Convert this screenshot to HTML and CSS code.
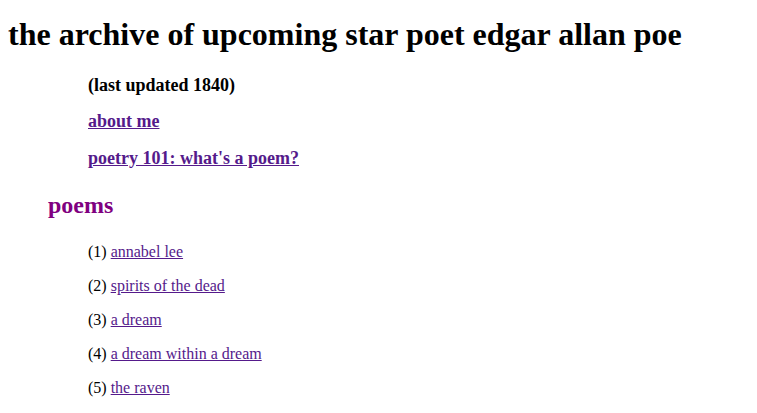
FILE: index.html
```html
<!DOCTYPE html>
<html>
<head>
<meta charset="utf-8">
<title>edgar allan poe</title>
<link rel="stylesheet" href="styles.css">
</head>
<body>
<h1 class="title">the archive of upcoming star poet edgar allan poe</h1>
<div class="intro">
  <h3 class="meta">(last updated 1840)</h3>
  <h3 class="meta"><a href="#about">about me</a></h3>
  <h3 class="meta"><a href="#poetry">poetry 101: what's a poem?</a></h3>
</div>
<h2 class="section">poems</h2>
<div class="list">
  <p class="item">(1) <a href="#annabel">annabel lee</a></p>
  <p class="item">(2) <a href="#spirits">spirits of the dead</a></p>
  <p class="item">(3) <a href="#dream">a dream</a></p>
  <p class="item">(4) <a href="#within">a dream within a dream</a></p>
  <p class="item">(5) <a href="#raven">the raven</a></p>
</div>
</body>
</html>
```
FILE: styles.css
```css
body {
  margin: 8px;
  font-family: "Liberation Serif", "Times New Roman", serif;
  color: #000;
  background: #fff;
}
a {
  color: #551a8b;
}
.title {
  font-size: 32px;
  margin: 8px 0 22px;
}
.intro {
  margin-left: 80px;
}
.meta {
  font-size: 18px;
  margin: 15.3px 0;
}
.section {
  color: #800080;
  font-size: 24px;
  margin: 23px 0 24px 40px;
}
.list {
  margin-left: 80px;
}
.item {
  font-size: 16px;
  margin: 16px 0;
}
```
